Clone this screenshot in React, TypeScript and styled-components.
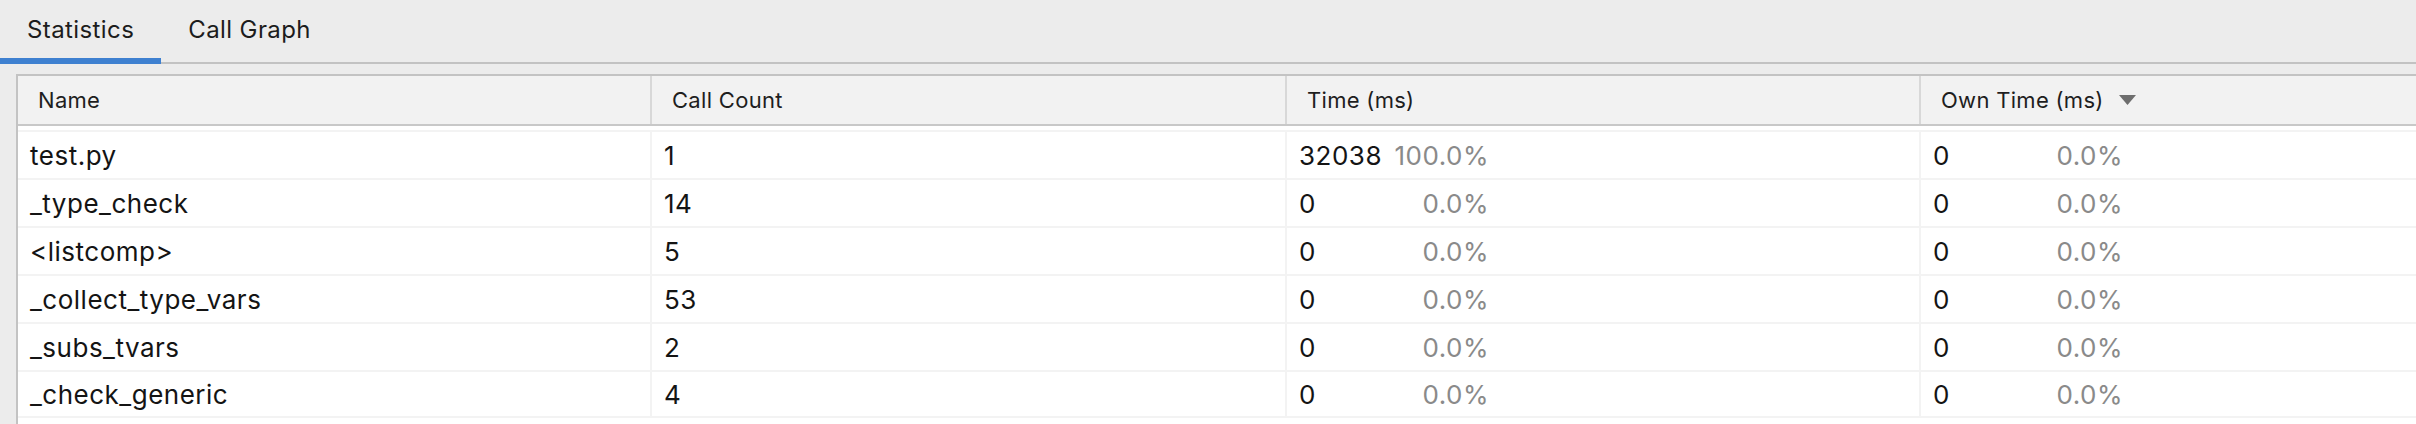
import React from "react";
import styled, { createGlobalStyle } from "styled-components";

const GlobalStyle = createGlobalStyle`
  html, body { margin: 0; padding: 0; background: #ececec; }
  body {
    font-family: Inter, "Noto Sans", sans-serif;
    -webkit-font-smoothing: antialiased;
  }
`;

const COLUMNS = "632px 635px 634px 1fr";

const Page = styled.div`
  width: 2416px;
  height: 424px;
  overflow: hidden;
  background: #ececec;
  display: flex;
  flex-direction: column;
`;

const TabBar = styled.div`
  display: flex;
  height: 64px;
  flex-shrink: 0;
  box-sizing: border-box;
  background: #ececec;
  box-shadow: inset 0 -2px 0 #c2c2c2;
`;

const Tab = styled.div<{ $active?: boolean }>`
  box-sizing: border-box;
  height: 64px;
  padding: 0 27px;
  display: flex;
  align-items: center;
  border-bottom: 6px solid ${(p) => (p.$active ? "#3e80d0" : "transparent")};
  font-size: 24px;
  letter-spacing: 0.4px;
  color: #1c1c1c;
`;

const Panel = styled.div`
  flex: 1;
  display: flex;
  padding: 10px 0 0 16px;
  min-height: 0;
`;

const Table = styled.div`
  flex: 1;
  display: flex;
  flex-direction: column;
  border-top: 2px solid #c3c3c3;
  border-left: 2px solid #c3c3c3;
  background: #ffffff;
`;

const HeaderRow = styled.div`
  display: grid;
  grid-template-columns: ${COLUMNS};
  height: 50px;
  box-sizing: border-box;
  background: #f2f2f2;
  border-bottom: 2px solid #c8c8c8;
`;

const HeaderCell = styled.div<{ $divider?: boolean }>`
  display: flex;
  align-items: center;
  gap: 15px;
  padding-left: 20px;
  font-size: 22px;
  letter-spacing: 0.3px;
  color: #1e1e1e;
  border-left: ${(p) => (p.$divider ? "2px solid #d8d8d8" : "none")};
  white-space: nowrap;
`;

const Body = styled.div`
  padding-top: 4px;
  background: #ffffff;
`;

const Row = styled.div`
  display: grid;
  grid-template-columns: ${COLUMNS};
  height: 48px;
  box-sizing: border-box;
  border-top: 2px solid #f3f3f3;
  &:last-child {
    border-bottom: 2px solid #f3f3f3;
  }
`;

const Cell = styled.div<{ $divider?: boolean }>`
  display: flex;
  align-items: center;
  padding-left: 12px;
  font-size: 26px;
  letter-spacing: 0.5px;
  color: #141414;
  border-left: ${(p) => (p.$divider ? "2px solid #f3f3f3" : "none")};
  white-space: nowrap;
`;

const TimeValue = styled.div`
  display: flex;
  justify-content: space-between;
  width: 190px;
`;

const Percent = styled.span`
  color: #8a8a8a;
`;

const SortArrow = () => (
  <svg width="17" height="10" viewBox="0 0 17 10">
    <polygon points="0,0 17,0 8.5,10" fill="#6e6e6e" />
  </svg>
);

type Entry = {
  name: string;
  count: number;
  time: number;
  timePct: string;
  own: number;
  ownPct: string;
};

const rows: Entry[] = [
  { name: "test.py", count: 1, time: 32038, timePct: "100.0%", own: 0, ownPct: "0.0%" },
  { name: "_type_check", count: 14, time: 0, timePct: "0.0%", own: 0, ownPct: "0.0%" },
  { name: "<listcomp>", count: 5, time: 0, timePct: "0.0%", own: 0, ownPct: "0.0%" },
  { name: "_collect_type_vars", count: 53, time: 0, timePct: "0.0%", own: 0, ownPct: "0.0%" },
  { name: "_subs_tvars", count: 2, time: 0, timePct: "0.0%", own: 0, ownPct: "0.0%" },
  { name: "_check_generic", count: 4, time: 0, timePct: "0.0%", own: 0, ownPct: "0.0%" },
];

export default function App() {
  return (
    <>
      <GlobalStyle />
      <Page>
        <TabBar>
          <Tab $active>Statistics</Tab>
          <Tab>Call Graph</Tab>
        </TabBar>
        <Panel>
          <Table>
            <HeaderRow>
              <HeaderCell>Name</HeaderCell>
              <HeaderCell $divider>Call Count</HeaderCell>
              <HeaderCell $divider>Time (ms)</HeaderCell>
              <HeaderCell $divider>
                Own Time (ms)
                <SortArrow />
              </HeaderCell>
            </HeaderRow>
            <Body>
              {rows.map((r) => (
                <Row key={r.name}>
                  <Cell>{r.name}</Cell>
                  <Cell $divider>{r.count}</Cell>
                  <Cell $divider>
                    <TimeValue>
                      <span>{r.time}</span>
                      <Percent>{r.timePct}</Percent>
                    </TimeValue>
                  </Cell>
                  <Cell $divider>
                    <TimeValue>
                      <span>{r.own}</span>
                      <Percent>{r.ownPct}</Percent>
                    </TimeValue>
                  </Cell>
                </Row>
              ))}
            </Body>
          </Table>
        </Panel>
      </Page>
    </>
  );
}
